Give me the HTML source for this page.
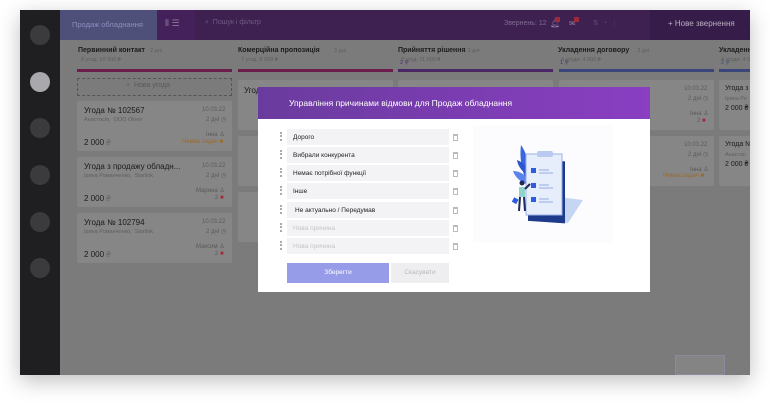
<!DOCTYPE html>
<html><head><meta charset="utf-8"><style>
*{margin:0;padding:0;box-sizing:border-box}
body{width:770px;height:405px;background:#fff;font-family:"Liberation Sans","DejaVu Sans",sans-serif;position:relative;overflow:hidden}
.a{position:absolute}
.frame{left:20px;top:10px;width:730px;height:365px;background:#7b7b7b;box-shadow:0 6px 20px rgba(0,0,0,.25);overflow:hidden}
.side{left:0;top:0;width:40px;height:365px;background:#1f1f22}
.circ{left:10px;width:20px;height:20px;border-radius:50%;background:#3b3b3e}
.card{background:#868686;border-radius:2px}
.t{font-size:8px;color:#1c1c1c;white-space:nowrap}
.s{font-size:5.5px;color:#5e5e5e;white-space:nowrap}
.g{font-size:6px;color:#5a5a5a;white-space:nowrap}
.row{left:29px;width:162px;height:16px;background:#f3f3f5;font-size:6.5px;color:#222;padding:5px 0 0 6px}
.dots{left:22px;width:2px;height:9px;border-left:2px dotted #aaa}
.tr{left:195px;width:5px;height:7px;border:1px solid #bbb;border-top:2px solid #bbb}
</style></head><body>
<div class="a frame">
 <div class="a side">
  <div class="a circ" style="top:15px"></div>
  <div class="a circ" style="top:62px;background:#a9a9ad"></div>
  <div class="a circ" style="top:108px"></div>
  <div class="a circ" style="top:155px"></div>
  <div class="a circ" style="top:202px"></div>
  <div class="a circ" style="top:248px"></div>
 </div>
 <div class="a" style="left:40px;top:0;width:690px;height:30px;background:#3e2151"></div>
 <div class="a" style="left:40px;top:0;width:97px;height:30px;background:#4e5079;color:#8b8fbd;font-size:7.5px;padding:10px 0 0 12px">Продаж обладнання</div>
 <div class="a" style="left:137px;top:0;width:38px;height:30px;background:#44215a;color:#8a7a99;font-size:9px;padding:8px 0 0 8px">⦀ ☰</div>
 <div class="a" style="left:185px;top:9px;color:#6f5a82;font-size:7px">⌕&nbsp; Пошук і фільтр</div>
 <div class="a" style="left:484px;top:10px;color:#7e6b90;font-size:7px">Звернень: 12</div>
 <div class="a" style="left:530px;top:9px;color:#8c7a9d;font-size:8px">🔔︎</div>
 <div class="a" style="left:535px;top:7px;width:5px;height:5px;background:#a02a3a"></div>
 <div class="a" style="left:549px;top:9px;color:#8c7a9d;font-size:8px">✉︎</div>
 <div class="a" style="left:554px;top:7px;width:5px;height:5px;background:#a02a3a"></div>
 <div class="a" style="left:573px;top:9px;color:#5f4b70;font-size:7px">⇅ &nbsp;◔ &nbsp;⋮</div>
 <div class="a" style="left:630px;top:0;width:100px;height:30px;background:#361c48;color:#b8aec2;font-size:8px;padding:9px 0 0 18px">+ Нове звернення</div>

 <!-- columns -->
 <div class="a t" style="left:58px;top:37px;font-weight:bold;font-size:7px">Первинний контакт <span class="s" style="font-weight:normal">&nbsp; 2 дні</span></div>
 <div class="a s" style="left:61px;top:47px">8 угод: 10 000 ₴</div>
 <div class="a" style="left:57px;top:59px;width:155px;height:3px;background:#6b1e4c"></div>
 <div class="a" style="left:57px;top:68px;width:155px;height:18px;border:1px dashed #555;color:#5a5a5a;font-size:7px;padding:3px 0 0 48px">+ &nbsp;Нова угода</div>

 <div class="a t" style="left:218px;top:37px;font-weight:bold;font-size:7px">Комерційна пропозиція <span class="s" style="font-weight:normal">&nbsp;&nbsp;&nbsp;&nbsp;&nbsp;&nbsp;&nbsp; 3 дні</span></div>
 <div class="a s" style="left:221px;top:47px">7 угод: 8 000 ₴</div>
 <div class="a s" style="left:380px;top:50px;color:#4a2a6a">2 ⚲</div>
 <div class="a" style="left:218px;top:59px;width:155px;height:3px;background:#6b1e4c"></div>

 <div class="a t" style="left:378px;top:37px;font-weight:bold;font-size:7px">Прийняття рішення <span class="s" style="font-weight:normal">3 дні</span></div>
 <div class="a s" style="left:381px;top:47px">8 угод: 11 000 ₴</div>
 <div class="a s" style="left:540px;top:50px;color:#4a2a6a">1 ⚲</div>
 <div class="a" style="left:378px;top:59px;width:155px;height:3px;background:#4a2665"></div>

 <div class="a t" style="left:538px;top:37px;font-weight:bold;font-size:7px">Укладення договору <span class="s" style="font-weight:normal">&nbsp;&nbsp;&nbsp; 3 дні</span></div>
 <div class="a s" style="left:541px;top:47px">4 угоди: 4 000 ₴</div>
 <div class="a s" style="left:701px;top:50px;color:#3a4a7a">2 ⚲</div>
 <div class="a" style="left:539px;top:59px;width:155px;height:3px;background:#3a4579"></div>

 <div class="a t" style="left:699px;top:37px;font-weight:bold;font-size:7px">Укладення</div>
 <div class="a s" style="left:701px;top:47px">4 угоди: 4 0</div>
 <div class="a" style="left:699px;top:59px;width:40px;height:3px;background:#3a4579"></div>

 <!-- col1 cards -->
 <div class="a card" style="left:57px;top:91px;width:155px;height:50px"></div>
 <div class="a t" style="left:64px;top:96px">Угода № 102567</div>
 <div class="a s" style="left:64px;top:107px">Анастасія, &nbsp;ООО Oliver</div>
 <div class="a g" style="left:182px;top:97px">10.03.22</div>
 <div class="a g" style="left:186px;top:106px">2 дні ◷</div>
 <div class="a g" style="left:186px;top:121px">Інна ♙</div>
 <div class="a g" style="left:162px;top:129px;color:#9a6a2a">Немає задач ■</div>
 <div class="a t" style="left:64px;top:128px">2 000 <span style="color:#666">₴</span></div>

 <div class="a card" style="left:57px;top:147px;width:155px;height:50px"></div>
 <div class="a t" style="left:64px;top:152px">Угода з продажу обладн...</div>
 <div class="a s" style="left:64px;top:163px">Ірина Романченко, &nbsp;Starlink</div>
 <div class="a g" style="left:182px;top:153px">10.03.22</div>
 <div class="a g" style="left:186px;top:162px">2 дні ◷</div>
 <div class="a g" style="left:176px;top:177px">Марина ♙</div>
 <div class="a g" style="left:195px;top:185px">2 <span style="color:#a02a3a">■</span></div>
 <div class="a t" style="left:64px;top:184px">2 000 <span style="color:#666">₴</span></div>

 <div class="a card" style="left:57px;top:203px;width:155px;height:50px"></div>
 <div class="a t" style="left:64px;top:208px">Угода № 102794</div>
 <div class="a s" style="left:64px;top:219px">Ірина Романченко, &nbsp;Starlink</div>
 <div class="a g" style="left:182px;top:209px">10.03.22</div>
 <div class="a g" style="left:186px;top:218px">2 дні ◷</div>
 <div class="a g" style="left:176px;top:233px">Максим ♙</div>
 <div class="a g" style="left:195px;top:241px">2 <span style="color:#a02a3a">■</span></div>
 <div class="a t" style="left:64px;top:240px">2 000 <span style="color:#666">₴</span></div>

 <!-- other column cards -->
 <div class="a card" style="left:218px;top:70px;width:155px;height:50px"></div>
 <div class="a t" style="left:224px;top:76px">Угода № 102789</div>
 <div class="a card" style="left:218px;top:126px;width:155px;height:50px"></div>
 <div class="a card" style="left:218px;top:182px;width:155px;height:50px"></div>
 <div class="a card" style="left:378px;top:70px;width:155px;height:50px"></div>
 <div class="a card" style="left:539px;top:70px;width:155px;height:50px"></div>
 <div class="a g" style="left:664px;top:76px">10.03.22</div>
 <div class="a g" style="left:668px;top:85px">2 дні ◷</div>
 <div class="a g" style="left:670px;top:100px">Інна ♙</div>
 <div class="a g" style="left:677px;top:108px">2 <span style="color:#a02a3a">■</span></div>
 <div class="a card" style="left:539px;top:126px;width:155px;height:50px"></div>
 <div class="a g" style="left:664px;top:132px">10.03.22</div>
 <div class="a g" style="left:668px;top:141px">2 дні ◷</div>
 <div class="a g" style="left:670px;top:156px">Інна ♙</div>
 <div class="a g" style="left:643px;top:163px;color:#9a6a2a">Немає задач ■</div>
 <div class="a card" style="left:699px;top:70px;width:40px;height:50px"></div>
 <div class="a t" style="left:705px;top:75px;font-size:7px">Угода з</div>
 <div class="a s" style="left:705px;top:86px">Ірина Ро</div>
 <div class="a t" style="left:705px;top:95px;font-size:7px">2 000 ₴</div>
 <div class="a card" style="left:699px;top:126px;width:40px;height:50px"></div>
 <div class="a t" style="left:705px;top:131px;font-size:7px">Угода №</div>
 <div class="a s" style="left:705px;top:142px">Анастас</div>
 <div class="a t" style="left:705px;top:151px;font-size:7px">2 000 ₴</div>
 <div class="a" style="left:655px;top:345px;width:50px;height:20px;background:#848484;border:1px solid #8a8aa0"></div>
</div>

<!-- modal -->
<div class="a" style="left:258px;top:87px;width:392px;height:205px;background:#fff">
 <div class="a" style="left:0;top:0;width:392px;height:32px;background:linear-gradient(90deg,#6a3b9e,#8a3ec2);color:#fff;font-size:8.5px;padding:11px 0 0 31px">Управління причинами відмови для Продаж обладнання</div>
 <div class="a row" style="top:42px">Дорого</div>
 <div class="a row" style="top:60px">Вибрали конкурента</div>
 <div class="a row" style="top:78px">Немає потрібної функції</div>
 <div class="a row" style="top:96px">Інше</div>
 <div class="a row" style="top:115px;padding-left:8px">Не актуально / Передумав</div>
 <div class="a row" style="top:133px;color:#c4c4c8">Нова причина</div>
 <div class="a row" style="top:151px;color:#c4c4c8">Нова причина</div>
 <div class="a dots" style="top:45px"></div><div class="a dots" style="top:63px"></div><div class="a dots" style="top:81px"></div><div class="a dots" style="top:99px"></div><div class="a dots" style="top:118px"></div><div class="a dots" style="top:136px"></div><div class="a dots" style="top:154px"></div>
 <div class="a tr" style="top:47px"></div><div class="a tr" style="top:65px"></div><div class="a tr" style="top:83px"></div><div class="a tr" style="top:101px"></div><div class="a tr" style="top:120px"></div><div class="a tr" style="top:138px"></div><div class="a tr" style="top:156px"></div>
 <div class="a" style="left:29px;top:176px;width:102px;height:20px;background:#979ce9;color:#fff;font-size:6.5px;text-align:center;padding-top:6px">Зберегти</div>
 <div class="a" style="left:133px;top:176px;width:58px;height:20px;background:#eeeef0;color:#b8b8bc;font-size:6.5px;text-align:center;padding-top:6px">Скасувати</div>
 <svg class="a" style="left:215px;top:38px" width="140" height="118" viewBox="0 0 140 118">
  <rect x="0" y="0" width="140" height="118" fill="#fcfcfe"/>
  <polygon points="68,70 110,75 95,98 70,95" fill="#c6d6f2"/>
  <path d="M48,20 C55,30 58,45 55,60 C50,50 46,35 48,20Z" fill="#3a66e0"/>
  <path d="M40,46 C50,46 56,54 56,60 C48,58 42,52 40,46Z" fill="#5b82ea"/>
  <path d="M44,35 C52,38 56,45 56,50 C50,48 45,42 44,35Z" fill="#2c55d0"/>
  <rect x="55" y="30" width="37" height="62" fill="#1e3a8a" transform="skewY(4)"/>
  <rect x="53" y="29" width="36" height="61" fill="#e6edfb" stroke="#9ab0e8" stroke-width="1"/>
  <rect x="64" y="26" width="16" height="6" rx="2" fill="#b9c9f0"/>
  <rect x="58" y="43" width="5" height="5" fill="#2f5be0"/>
  <rect x="58" y="58" width="5" height="5" fill="#2f5be0"/>
  <rect x="58" y="72" width="5" height="5" fill="#2f5be0"/>
  <path d="M66,45h10M66,48h14M66,60h10M66,63h14M66,74h10M66,77h14" stroke="#7d96e0" stroke-width=".8"/>
  <rect x="46" y="62" width="6" height="10" fill="#8fd3c9"/>
  <circle cx="49" cy="58" r="2.5" fill="#1e2a5a"/>
  <path d="M47,72l-1,14M51,72l1,14" stroke="#1e2a5a" stroke-width="2"/>
  <path d="M52,64l5,-5" stroke="#1e2a5a" stroke-width="2"/>
  <rect x="40" y="73" width="5" height="5" fill="#2f5be0" transform="rotate(30 42 75)"/>
 </svg>
</div>
</body></html>
